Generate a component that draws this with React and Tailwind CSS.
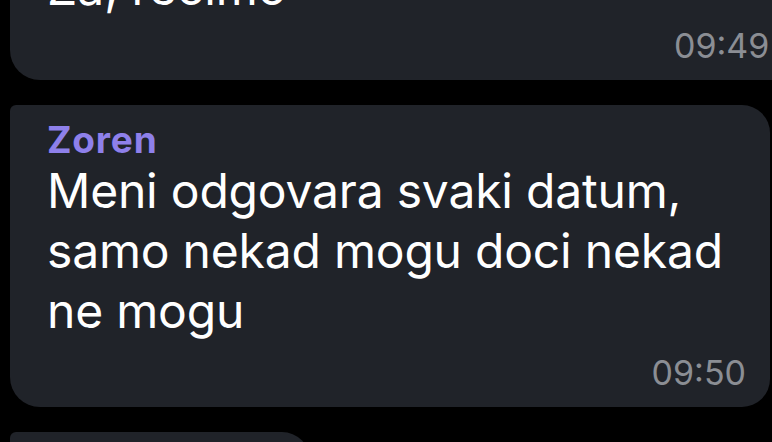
export default function App() {
  return (
    <div className="w-[772px] h-[442px] bg-black overflow-hidden flex flex-col" style={{ fontFamily: 'Inter, "Noto Sans", sans-serif' }}>
      <div className="shrink-0 h-[80px] ml-[10px] w-[790px] bg-[#202329] rounded-bl-[30px] rounded-br-[28px] relative overflow-hidden">
        <div className="absolute left-[37px] top-[-42px] text-white text-[48px] leading-[60px]">Za, recimo</div>
        <div className="absolute left-[664px] top-[26px] text-[#8b8e94] text-[34px] leading-[40px]">09:49</div>
      </div>
      <div className="shrink-0 mt-[25px] h-[302px] ml-[10px] mr-[2px] bg-[#202329] rounded-tl-[6px] rounded-tr-[28px] rounded-br-[28px] rounded-bl-[30px] flex flex-col pl-[37px] pr-[24px] pt-[13px]">
        <div className="text-[#8e80ea] text-[37px] font-bold leading-[44px] tracking-[0.8px]">Zoren</div>
        <div className="text-white text-[48px] leading-[60px] -mt-[1.5px] tracking-[-0.2px]">
          Meni odgovara svaki datum,<br />samo nekad mogu doci nekad<br />ne mogu
        </div>
        <div className="self-end text-[#8b8e94] text-[34px] leading-[40px] mt-[12px]">09:50</div>
      </div>
      <div className="shrink-0 mt-[25px] h-[40px] ml-[10px] w-[300px] bg-[#202329] rounded-tl-[6px] rounded-tr-[28px]" />
    </div>
  );
}
